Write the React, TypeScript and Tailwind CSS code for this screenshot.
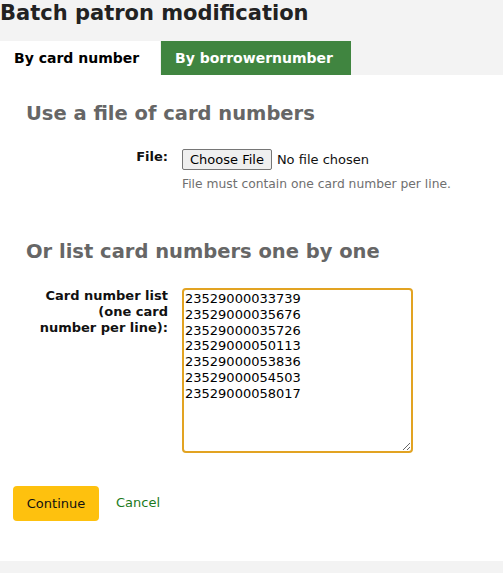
const cardNumbers = [
  '23529000033739',
  '23529000035676',
  '23529000035726',
  '23529000050113',
  '23529000053836',
  '23529000054503',
  '23529000058017',
];

export default function App() {
  return (
    <div className="min-h-[573px] bg-[#f3f3f3] font-['DejaVu_Sans',sans-serif] text-[#111]">
      <h1 className="h-[41px] pt-px text-[21px] font-bold leading-[25px] text-[#222]">
        Batch patron modification
      </h1>

      {/* Tabs */}
      <div className="flex border-b border-[#e3e3e3]">
        <div className="flex h-[34px] w-[160px] items-center bg-white px-[14px] text-[14px] font-bold text-black">
          By card number
        </div>
        <div className="ml-px flex h-[34px] w-[190px] items-center bg-[#408540] px-[14px] text-[14px] font-bold text-white">
          By borrowernumber
        </div>
      </div>

      <div className="-mt-px h-[486px] bg-white px-[13px] pt-[27px]">
        {/* Use a file */}
        <div className="px-[13px]">
          <h2 className="text-[19.5px] font-bold leading-[24px] text-[#666]">Use a file of card numbers</h2>
        </div>
        <div className="mt-[23px] flex">
          <label className="w-[169px] shrink-0 pr-[14px] text-right text-[13px] font-bold leading-[16px]">File:</label>
          <div className="flex flex-col">
            <div className="flex items-center text-[13px]">
              <button className="h-[21px] rounded-[2px] border border-[#767676] bg-[#efefef] px-[7px] leading-[19px] text-black">
                Choose File
              </button>
              <span className="ml-[5px]">No file chosen</span>
            </div>
            <p className="mt-[6px] text-[12.3px] leading-[16px] text-[#6f6f6f]">
              File must contain one card number per line.
            </p>
          </div>
        </div>

        {/* List card numbers */}
        <div className="mt-[48px] px-[13px]">
          <h2 className="text-[19.5px] font-bold leading-[24px] text-[#666]">Or list card numbers one by one</h2>
        </div>
        <div className="mt-[24px] flex">
          <div className="flex w-[169px] shrink-0 justify-end pr-[14px]">
            <label className="w-[130px] text-right text-[13px] font-bold leading-[16px]">
              Card number list (one card number per line):
            </label>
          </div>
          <textarea
            className="h-[165px] w-[231px] resize-y rounded-[4px] border-2 border-[#e2a322] px-[1px] pt-px text-[13px] leading-[15.8px] text-black outline-none"
            defaultValue={cardNumbers.join('\n')}
          />
        </div>

        <div className="mt-[33px] flex items-center">
          <button className="h-[35px] w-[86px] rounded-[4px] bg-[#fec10e] text-[13px] text-[#111]">Continue</button>
          <a href="#" className="ml-[17px] -mt-px text-[13px] text-[#1c7a1c]">
            Cancel
          </a>
        </div>
      </div>
    </div>
  );
}
